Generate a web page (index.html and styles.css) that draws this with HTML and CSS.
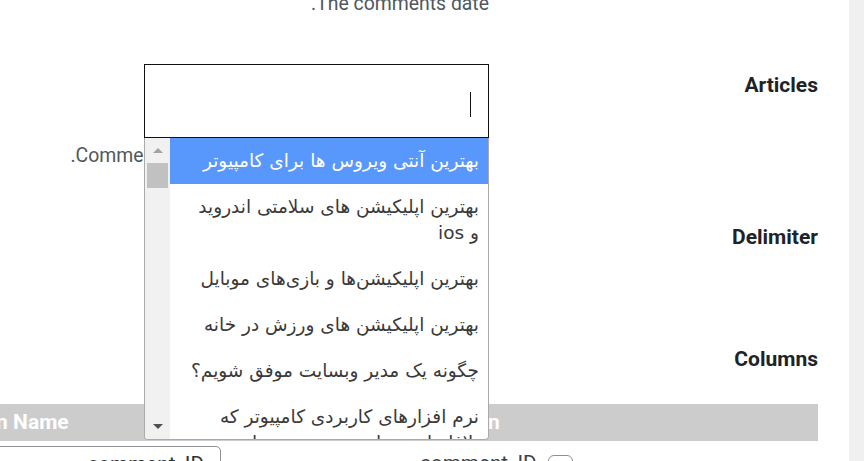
FILE: index.html
```html
<!DOCTYPE html>
<html lang="en">
<head>
<meta charset="utf-8">
<title>Comments export settings</title>
<link rel="stylesheet" href="styles.css">
</head>
<body>
<div class="page">
  <main class="main">
    <div class="row row-top">
      <div class="label"></div>
      <div class="field"><p class="desc">The comments date.</p></div>
    </div>

    <div class="row row-articles">
      <div class="label">Articles</div>
      <div class="field">
        <div class="select">
          <div class="search"><span class="caret"></span></div>
          <div class="dropdown">
            <ul class="options">
              <li class="option active">بهترین آنتی ویروس ها برای کامپیوتر</li>
              <li class="option">بهترین اپلیکیشن های سلامتی اندروید و ios</li>
              <li class="option">بهترین اپلیکیشن‌ها و بازی‌های موبایل</li>
              <li class="option">بهترین اپلیکیشن های ورزش در خانه</li>
              <li class="option">چگونه یک مدیر وبسایت موفق شویم؟</li>
              <li class="option">نرم افزارهای کاربردی کامپیوتر که بلافاصله بعد از نصب ویندوز باید نصب کنید</li>
            </ul>
            <div class="scrollbar">
              <span class="sb-btn"><span class="arrow-up"></span></span>
              <span class="sb-thumb"></span>
              <span class="sb-track"></span>
              <span class="sb-btn"><span class="arrow-down"></span></span>
            </div>
          </div>
        </div>
        <p class="desc desc-articles">Comments from the selected articles are shown.</p>
      </div>
    </div>

    <div class="row row-delimiter">
      <div class="label">Delimiter</div>
      <div class="field"><div class="text-input"></div></div>
    </div>

    <div class="row row-columns">
      <div class="label">Columns</div>
      <div class="field"></div>
    </div>

    <div class="table">
      <div class="thead">
        <div class="th th-show">Column</div>
        <div class="th th-name">Column Name</div>
      </div>
      <div class="trow">
        <div class="td td-show">
          <label class="check"><span class="box"></span><span class="check-text">comment_ID</span></label>
        </div>
        <div class="td td-name"><div class="name-input">comment_ID</div></div>
      </div>
    </div>
  </main>
  <aside class="sidebar"></aside>
</div>
</body>
</html>
```

FILE: styles.css
```css
html, body {
  margin: 0;
  padding: 0;
  background: #ffffff;
}

body {
  font-family: Roboto, "Liberation Sans", sans-serif;
  color: #1d2327;
}

.page {
  display: flex;
  width: 864px;
  height: 461px;
  overflow: hidden;
}

.main {
  width: 849px;
  flex: none;
  direction: rtl;
  padding-right: 31px;
  box-sizing: border-box;
  overflow: hidden;
}

.sidebar {
  flex: 1;
  background: #f0f0f1;
}

.row {
  display: grid;
  grid-template-columns: 329px 345px;
}

.label {
  font-size: 21px;
  font-weight: 700;
  line-height: 26px;
  padding-top: 8px;
  text-align: right;
  color: #1d2327;
}

.field {
  position: relative;
}

.desc {
  margin: 0;
  font-size: 19.4px;
  line-height: 26px;
  color: #50575e;
  white-space: nowrap;
}

.row-top {
  margin-top: -9px;
  height: 26px;
}

.row-top .label {
  padding-top: 0;
}

.row-articles {
  margin-top: 47px;
  height: 152px;
}

.row-delimiter {
  height: 122px;
}

.row-columns {
  height: 66px;
}

.desc-articles {
  margin-top: 5px;
}

.select {
  position: relative;
}

.search {
  height: 72px;
  border: 1px solid #111;
  display: flex;
  align-items: flex-start;
  padding-right: 17px;
}

.caret {
  width: 1px;
  height: 25px;
  margin-top: 27px;
  background: #111;
}

.dropdown {
  position: absolute;
  top: 100%;
  left: 0;
  right: 0;
  height: 301px;
  border: 1px solid #aaa;
  border-top: 0;
  border-radius: 0 0 4px 4px;
  background: #fff;
  display: flex;
  overflow: hidden;
  z-index: 2;
}

.options {
  flex: 1;
  margin: 0;
  padding: 0;
  list-style: none;
  overflow: hidden;
}

.option {
  padding: 10px 9px 10px 20px;
  font-family: "DejaVu Sans", sans-serif;
  font-size: 18.5px;
  line-height: 26px;
  color: #3a3a3a;
  text-align: right;
}

.option.active {
  background: #5897fb;
  color: #fff;
}

.scrollbar {
  width: 25px;
  flex: none;
  background: #f1f1f1;
  display: flex;
  flex-direction: column;
  align-items: center;
}

.sb-btn {
  height: 25px;
  width: 100%;
  display: flex;
  align-items: center;
  justify-content: center;
  flex: none;
}

.sb-thumb {
  width: 21px;
  height: 25px;
  background: #c1c1c1;
  flex: none;
  margin-right: 1px;
}

.sb-track {
  flex: 1;
}

.arrow-up {
  width: 0;
  height: 0;
  border-left: 5px solid transparent;
  border-right: 5px solid transparent;
  border-bottom: 5px solid #a3a3a3;
}

.arrow-down {
  width: 0;
  height: 0;
  border-left: 5px solid transparent;
  border-right: 5px solid transparent;
  border-top: 5px solid #505050;
}

.text-input {
  height: 40px;
  border: 1px solid #8c8f94;
  border-radius: 4px;
}

.table {
  width: 893px;
}

.thead {
  display: flex;
  height: 37px;
  background: #cccccc;
}

.th {
  font-size: 21px;
  font-weight: 700;
  line-height: 37px;
  color: #ffffff;
  text-align: left;
  padding-left: 10px;
  box-sizing: border-box;
}

.th-show {
  width: 401px;
  flex: none;
}

.th-name {
  flex: 1;
}

.trow {
  display: flex;
  margin-top: 5px;
}

.td {
  display: flex;
  justify-content: flex-end;
  box-sizing: border-box;
}

.td-show {
  width: 401px;
  flex: none;
  padding-left: 3px;
  padding-top: 4px;
}

.td-name {
  flex: 1;
  padding-left: 10px;
}

.check {
  display: flex;
  align-items: flex-start;
  gap: 11px;
  font-size: 20.7px;
  line-height: 26px;
  color: #3c434a;
}

.box {
  width: 23px;
  height: 23px;
  border: 1px solid #8c8f94;
  border-radius: 6px;
  margin-top: 5px;
  background: #fff;
}

.name-input {
  width: 286px;
  height: 40px;
  border: 1px solid #8c8f94;
  border-radius: 5px;
  box-sizing: border-box;
  padding: 4px 16px 0 16px;
  font-size: 20.7px;
  line-height: 26px;
  color: #2c3338;
  text-align: right;
}
```
